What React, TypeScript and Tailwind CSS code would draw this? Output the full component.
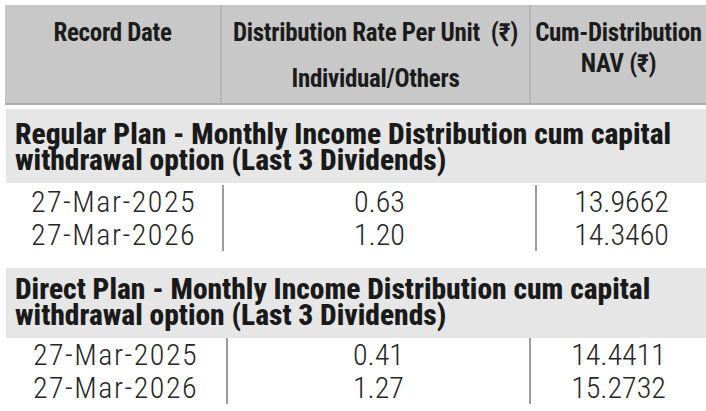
import React from "react";

interface Row {
    date: string;
    rate: string;
    nav: string;
}

interface PlanBlock {
    title: string[];
    rows: Row[];
    sectionClass: string;
    gridClass: string;
}

const blocks: PlanBlock[] = [
    {
        title: [
            "Regular Plan - Monthly Income Distribution cum capital",
            "withdrawal option (Last 3 Dividends)",
        ],
        rows: [
            { date: "27-Mar-2025", rate: "0.63", nav: "13.9662" },
            { date: "27-Mar-2026", rate: "1.20", nav: "14.3460" },
        ],
        sectionClass: "mt-[4px] pt-[12px] pb-[10px]",
        gridClass: "grid-cols-[217px_313px_1fr] pt-[2px] pb-[1px]",
    },
    {
        title: [
            "Direct Plan - Monthly Income Distribution cum capital",
            "withdrawal option (Last 3 Dividends)",
        ],
        rows: [
            { date: "27-Mar-2025", rate: "0.41", nav: "14.4411" },
            { date: "27-Mar-2026", rate: "1.27", nav: "15.2732" },
        ],
        sectionClass: "mt-[16px] pt-[8px] pb-[10px]",
        gridClass: "grid-cols-[221px_303px_1fr] pt-0 pb-[1px]",
    },
];

const narrow = "font-['Roboto_Condensed','Liberation_Sans_Narrow','Arial_Narrow','DejaVu_Sans_Condensed',sans-serif]";

const Header: React.FC = () => (
    <div className={`grid grid-cols-[215px_309px_1fr] h-[100px] bg-[#c8c8c8] border-b-2 border-[#acacac] text-[#1c1c1c] text-[25px] tracking-[-0.3px] font-bold whitespace-nowrap ${narrow}`}>
        <div className="pt-[14px] leading-[28px] text-center">Record Date</div>
        <div className="pt-[14px] leading-[28px] text-center border-l-2 border-[#b6b6b6]">
            <div>Distribution Rate Per Unit&nbsp; (₹)</div>
            <div className="mt-[18px]">Individual/Others</div>
        </div>
        <div className="pt-[12px] leading-[31px] text-center border-l-2 border-[#b6b6b6]">
            <div>Cum-Distribution</div>
            <div>NAV (₹)</div>
        </div>
    </div>
);

const Block: React.FC<{ block: PlanBlock }> = ({ block }) => (
    <>
        {/* plan title bar */}
        <div className={`bg-[#e6e6e6] ml-[1px] pl-[9px] text-[29.5px] leading-[26px] font-extrabold text-[#1a1a1a] whitespace-nowrap ${narrow} ${block.sectionClass}`}>
            {block.title.map((t) => (
                <div key={t}>{t}</div>
            ))}
        </div>

        {/* dividend rows */}
        <div className={`grid ${block.gridClass} text-[30px] leading-[33px] font-light text-[#262626] ${narrow}`}>
            <div className="text-center tracking-[1.5px]">
                {block.rows.map((r) => (
                    <div key={r.date}>{r.date}</div>
                ))}
            </div>
            <div className="text-center border-l-2 border-[#9c9c9c]">
                {block.rows.map((r) => (
                    <div key={r.date}>{r.rate}</div>
                ))}
            </div>
            <div className="text-center border-l-2 border-[#9c9c9c]">
                {block.rows.map((r) => (
                    <div key={r.date}>{r.nav}</div>
                ))}
            </div>
        </div>
    </>
);

export default function App() {
    return (
        <div className="w-[706px] h-[411px] overflow-hidden bg-white pl-[5px] pt-[5px]">
            <Header />
            {blocks.map((b) => (
                <Block key={b.title[0]} block={b} />
            ))}
        </div>
    );
}
